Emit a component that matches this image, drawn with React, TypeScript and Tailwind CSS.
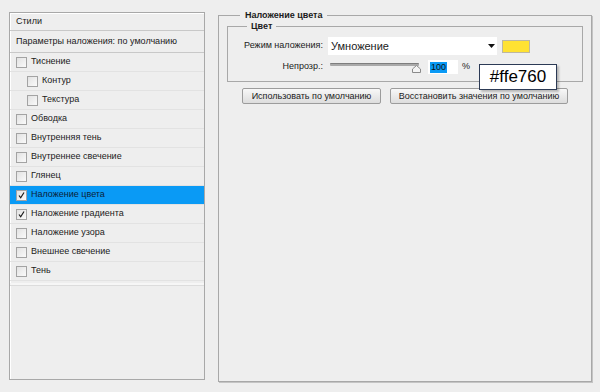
import React from 'react';

const font = { fontFamily: '"Liberation Sans", Arial, sans-serif' };

type Row = { label: string; indent?: boolean; checked?: boolean; active?: boolean };

const rows: Row[] = [
  { label: 'Тиснение' },
  { label: 'Контур', indent: true },
  { label: 'Текстура', indent: true },
  { label: 'Обводка' },
  { label: 'Внутренняя тень' },
  { label: 'Внутреннее свечение' },
  { label: 'Глянец' },
  { label: 'Наложение цвета', checked: true, active: true },
  { label: 'Наложение градиента', checked: true },
  { label: 'Наложение узора' },
  { label: 'Внешнее свечение' },
  { label: 'Тень' },
];

function Checkbox({ checked }: { checked?: boolean }) {
  return (
    <span className="w-[11px] h-[11px] border border-[#a3a3a3] bg-gradient-to-br from-[#e2e2e2] to-[#fafafa] flex items-center justify-center shrink-0">
      {checked && (
        <svg width="9" height="9" viewBox="0 0 9 9">
          <path d="M2 4.5 L3.7 6.8 L7 1.5" fill="none" stroke="#1a1a1a" strokeWidth="1.2" />
        </svg>
      )}
    </span>
  );
}

function StyleList() {
  return (
    <div className="w-[196px] h-[368px] mt-[12px] ml-[9px] border border-[#a8a8a8] shadow-[inset_1px_1px_0_#fff] flex flex-col text-[9px] text-[#1b1b1b]">
      <div className="h-[18px] flex items-center pl-[6px] border-b border-[#c8c8c8]">Стили</div>
      <div className="h-[22px] flex items-center pl-[6px] border-b border-[#c8c8c8] whitespace-nowrap">
        Параметры наложения: по умолчанию
      </div>
      {rows.map((r) => (
        <div
          key={r.label}
          className={`h-[19px] flex items-center gap-[4px] border-b border-[#e2e2e2] whitespace-nowrap ${r.indent ? 'pl-[17px]' : 'pl-[6px]'} ${r.active ? 'bg-[#0a9af5] text-[#0b1f3a]' : ''}`}
        >
          <Checkbox checked={r.checked} />
          <span>{r.label}</span>
        </div>
      ))}
      <div className="h-[3px] mt-[2px] border-b border-[#dcdcdc] bg-[#f6f6f6]" />
    </div>
  );
}

function Options() {
  return (
    <fieldset className="w-[374px] h-[372px] mt-[10px] ml-[13px] border border-[#a8a8a8] shadow-[1px_1px_0_#c4c4c4] px-[8px] text-[9px] text-[#1b1b1b]">
      <legend className="ml-[13px] px-[5px] font-bold text-[9px] leading-[10px]">Наложение цвета</legend>
      <fieldset className="w-[356px] h-[61px] mt-[1px] border border-[#a8a8a8] px-[8px]">
        <legend className="ml-[11px] px-[4px] font-bold leading-[10px]">Цвет</legend>
        <div className="flex items-center mt-[6px] h-[18px]">
          <span className="w-[87px] text-right whitespace-nowrap">Режим наложения:</span>
          <div className="ml-[5px] w-[169px] h-[18px] bg-white flex items-center pl-[3px] text-[11px] justify-between">
            <span>Умножение</span>
            <svg width="7" height="4" viewBox="0 0 7 4" className="mr-[2px]">
              <path d="M0 0 H7 L3.5 4 Z" fill="#111" />
            </svg>
          </div>
          <div className="ml-[5px] w-[28px] h-[13px] bg-[#ffe232] border border-[#bdb7a0]" />
        </div>
        <div className="flex items-center mt-[5px] h-[14px]">
          <span className="w-[87px] text-right">Непрозр.:</span>
          <div className="ml-[7px] w-[91px] h-[14px] relative">
            <div className="absolute left-0 right-[2px] top-[3px] h-[3px] bg-[#a9a9a9] border-t border-[#7d7d7d] rounded-[1px]" />
            <svg width="9" height="8" viewBox="0 0 9 8" className="absolute right-0 top-[5px]">
              <path d="M0.5 7.5 V4 L4.5 0.5 L8.5 4 V7.5 Z" fill="#f4f4f4" stroke="#8a8a8a" />
            </svg>
          </div>
          <div className="ml-[7px] w-[30px] h-[14px] bg-white flex items-center pl-[2px]">
            <span className="bg-[#0a9af5] text-[#111] px-[1px] leading-[11px]">100</span>
          </div>
          <span className="ml-[4px]">%</span>
        </div>
      </fieldset>
      <div className="flex gap-[9px] mt-[6px] ml-[15px]">
        <button className="h-[16px] w-[139px] border border-[#9c9c9c] rounded-[2px] bg-gradient-to-b from-[#f8f8f8] to-[#dddddd] text-[9px] leading-[14px] whitespace-nowrap">
          Использовать по умолчанию
        </button>
        <button className="h-[16px] w-[178px] border border-[#9c9c9c] rounded-[2px] bg-gradient-to-b from-[#f8f8f8] to-[#dddddd] text-[9px] leading-[14px] whitespace-nowrap">
          Восстановить значения по умолчанию
        </button>
      </div>
    </fieldset>
  );
}

export default function App() {
  return (
    <div className="w-[600px] h-[392px] bg-[#eeeeee] flex items-start relative overflow-hidden" style={font}>
      <StyleList />
      <Options />
      <div className="absolute left-[479px] top-[64px] w-[78px] h-[26px] bg-white border border-[#2c3a55] shadow-[2px_2px_2px_rgba(0,0,0,0.25)] flex items-center justify-center text-[17px] text-black">
        #ffe760
      </div>
    </div>
  );
}
